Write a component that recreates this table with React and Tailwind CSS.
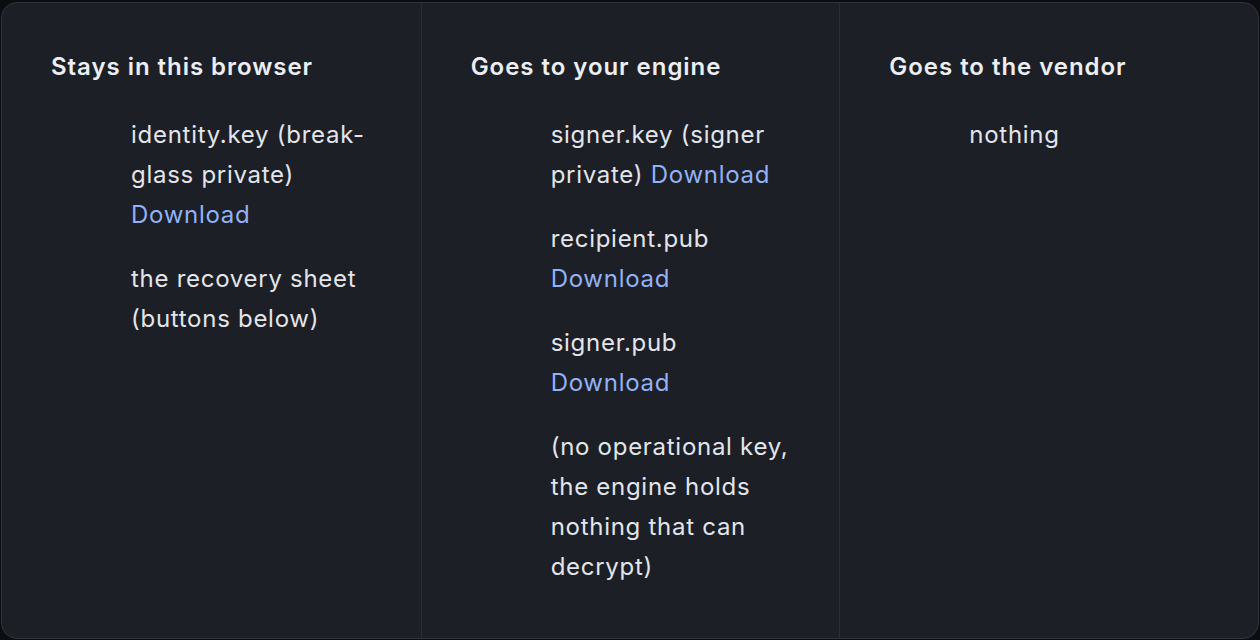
import React from "react";

const Link = ({ children }) => (
  <a href="#" className="text-[#92b1f7]">{children}</a>
);

function Column({ title, children, first }) {
  return (
    <div className={(first ? "" : "border-l border-[#292d35] ") + "pl-[49px] pt-[48px] pr-[50px]"}>
      <h3 className="text-[24px] leading-[32px] font-semibold tracking-[0.04em] text-[#eceef2] whitespace-nowrap">{title}</h3>
      <ul className="mt-[32px] pl-[80px] flex flex-col gap-[24px] text-[24px] leading-[40px] tracking-[0.03em] text-[#e3e5ea]">
        {children}
      </ul>
    </div>
  );
}

export default function App() {
  return (
    <div className="w-[1260px] h-[640px] bg-[#0c0d10] pt-[2px] pl-[1px] pr-[1px] pb-[1px]" style={{ fontFamily: "Inter, 'Noto Sans', sans-serif" }}>
      <div className="h-[637px] rounded-2xl border border-[#30343e] bg-[#1c1f26] grid grid-cols-3 overflow-hidden">
        <Column title="Stays in this browser" first>
          <li className="max-w-[240px]">identity.key (break-glass private) <Link>Download</Link></li>
          <li className="max-w-[240px]">the recovery sheet (buttons below)</li>
        </Column>
        <Column title="Goes to your engine">
          <li className="max-w-[240px]">signer.key (signer private) <Link>Download</Link></li>
          <li className="max-w-[240px]">recipient.pub <Link>Download</Link></li>
          <li className="max-w-[240px]">signer.pub <Link>Download</Link></li>
          <li className="max-w-[240px]">(no operational key, the engine holds nothing that can decrypt)</li>
        </Column>
        <Column title="Goes to the vendor">
          <li className="max-w-[240px]">nothing</li>
        </Column>
      </div>
    </div>
  );
}
